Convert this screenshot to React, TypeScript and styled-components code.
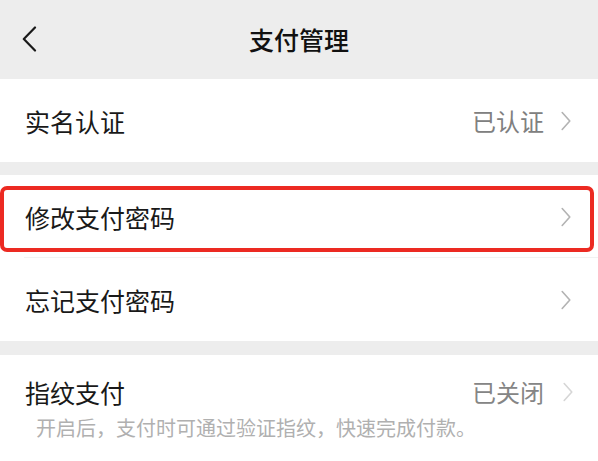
import React from "react";
import styled, { createGlobalStyle } from "styled-components";

const GlobalStyle = createGlobalStyle`
  html, body {
    margin: 0;
    padding: 0;
    background: #ededed;
  }
  body {
    font-family: "Noto Sans CJK SC", "Noto Sans", sans-serif;
    color: #191919;
  }
`;

const Page = styled.div`
  width: 598px;
  height: 461px;
  overflow: hidden;
  display: flex;
  flex-direction: column;
  background: #ededed;
`;

const Header = styled.header`
  flex: 0 0 79px;
  display: grid;
  grid-template-columns: 1fr auto 1fr;
  align-items: center;
  padding: 0 22px;
`;

const BackButton = styled.button`
  justify-self: start;
  display: flex;
  align-items: center;
  padding: 0;
  border: none;
  background: none;
  color: #191919;
  margin-top: -1px;
`;

const Title = styled.h1`
  margin: 0;
  font-size: 25px;
  line-height: 1;
  font-weight: 500;
  color: #111;
`;

const Section = styled.section<{ $fill?: boolean }>`
  background: #fff;
  margin-bottom: 13px;
  &:nth-of-type(2) {
    margin-bottom: 14px;
  }
  ${(p) => p.$fill && `flex: 1; margin-bottom: 0;`}
`;

const Row = styled.div<{ $highlighted?: boolean; $divider?: boolean }>`
  position: relative;
  height: 83px;
  display: flex;
  align-items: center;
  justify-content: space-between;
  padding: 0 27px 0 25px;
  ${(p) =>
    p.$divider &&
    `
    &::before {
      content: "";
      position: absolute;
      left: 24px;
      right: 0;
      bottom: 0;
      height: 1px;
      background: #f2f2f2;
    }
  `}
  ${(p) =>
    p.$highlighted &&
    `
    &::after {
      content: "";
      position: absolute;
      top: 11px;
      bottom: 6px;
      left: 0;
      right: 4px;
      border: 4px solid #ec2a22;
      border-radius: 7px;
    }
  `}
`;

const Label = styled.span`
  font-size: 25px;
  line-height: 26px;
  color: #191919;
`;

const Trailing = styled.span<{ $muted?: boolean }>`
  display: flex;
  align-items: center;
  gap: ${(p) => (p.$muted ? "19px" : "17px")};
  font-size: 24px;
  line-height: 26px;
  color: ${(p) => (p.$muted ? "#858585" : "#808080")};
  svg {
    stroke: ${(p) => (p.$muted ? "#d6d6d6" : "#b3b3b3")};
  }
`;

const SwitchBlock = styled.div`
  padding: 24px 25px 0 25px;
`;

const SwitchHead = styled.div`
  display: flex;
  justify-content: space-between;
  align-items: center;
`;

const Note = styled.p`
  margin: 11px 0 0 11px;
  font-size: 20px;
  line-height: 24px;
  color: #b0b0b0;
`;

const Chevron = () => (
  <svg width="10" height="20" viewBox="0 0 10 20" fill="none" strokeWidth="1.6" strokeLinecap="round" strokeLinejoin="round">
    <polyline points="1.2,1.5 8.8,10 1.2,18.5" />
  </svg>
);

const BackIcon = () => (
  <svg width="15" height="26" viewBox="0 0 15 26" fill="none" stroke="currentColor" strokeWidth="2.2" strokeLinecap="round" strokeLinejoin="round">
    <polyline points="13,1.5 1.8,13 13,24.5" />
  </svg>
);

export default function App() {
  return (
    <Page>
      <GlobalStyle />
      <Header>
        <BackButton aria-label="返回">
          <BackIcon />
        </BackButton>
        <Title>支付管理</Title>
        <span />
      </Header>

      <Section>
        <Row>
          <Label>实名认证</Label>
          <Trailing>
            已认证
            <Chevron />
          </Trailing>
        </Row>
      </Section>

      <Section>
        <Row $highlighted $divider>
          <Label>修改支付密码</Label>
          <Trailing>
            <Chevron />
          </Trailing>
        </Row>
        <Row>
          <Label>忘记支付密码</Label>
          <Trailing>
            <Chevron />
          </Trailing>
        </Row>
      </Section>

      <Section $fill>
        <SwitchBlock>
          <SwitchHead>
            <Label>指纹支付</Label>
            <Trailing $muted>
              已关闭
              <Chevron />
            </Trailing>
          </SwitchHead>
          <Note>开启后，支付时可通过验证指纹，快速完成付款。</Note>
        </SwitchBlock>
      </Section>
    </Page>
  );
}
